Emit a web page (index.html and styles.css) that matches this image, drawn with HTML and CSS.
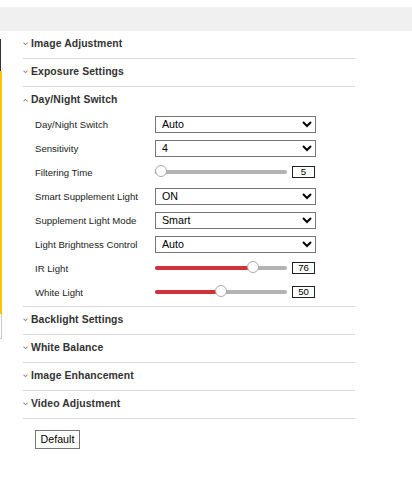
FILE: index.html
```html
<!DOCTYPE html>
<html>
<head>
<meta charset="utf-8">
<link rel="stylesheet" href="styles.css">
</head>
<body>
<div class="topbar"></div>
<div class="main">
  <div class="side">
    <div class="side-dark"></div>
    <div class="side-yellow"></div>
    <div class="side-box"></div>
  </div>
  <div class="content">
    <div class="sec">
      <div class="sec-head"><svg class="chev" viewBox="0 0 6 4" width="6" height="4"><path d="M0 0.6 L3 3.6 L6 0.6 L4.8 0.2 L3 2 L1.2 0.2 Z" fill="#808080"/></svg><span>Image Adjustment</span></div>
    </div>
    <div class="sec">
      <div class="sec-head"><svg class="chev" viewBox="0 0 6 4" width="6" height="4"><path d="M0 0.6 L3 3.6 L6 0.6 L4.8 0.2 L3 2 L1.2 0.2 Z" fill="#808080"/></svg><span>Exposure Settings</span></div>
    </div>
    <div class="sec open">
      <div class="sec-head"><svg class="chev" viewBox="0 0 6 4" width="6" height="4"><path d="M0 3.4 L3 0.4 L6 3.4 L4.8 3.8 L3 2 L1.2 3.8 Z" fill="#808080"/></svg><span>Day/Night Switch</span></div>
      <div class="form">
        <div class="row"><label>Day/Night Switch</label><select><option>Auto</option></select></div>
        <div class="row"><label>Sensitivity</label><select><option>4</option></select></div>
        <div class="row"><label>Filtering Time</label>
          <div class="slider"><div class="track"><div class="fill" style="width:6px"></div><div class="thumb" style="left:0px"></div></div><div class="val">5</div></div>
        </div>
        <div class="row"><label>Smart Supplement Light</label><select><option>ON</option></select></div>
        <div class="row"><label>Supplement Light Mode</label><select><option>Smart</option></select></div>
        <div class="row"><label>Light Brightness Control</label><select><option>Auto</option></select></div>
        <div class="row"><label>IR Light</label>
          <div class="slider"><div class="track"><div class="fill" style="width:98px"></div><div class="thumb" style="left:92px"></div></div><div class="val">76</div></div>
        </div>
        <div class="row"><label>White Light</label>
          <div class="slider"><div class="track"><div class="fill" style="width:66px"></div><div class="thumb" style="left:60px"></div></div><div class="val">50</div></div>
        </div>
      </div>
    </div>
    <div class="sec">
      <div class="sec-head"><svg class="chev" viewBox="0 0 6 4" width="6" height="4"><path d="M0 0.6 L3 3.6 L6 0.6 L4.8 0.2 L3 2 L1.2 0.2 Z" fill="#808080"/></svg><span>Backlight Settings</span></div>
    </div>
    <div class="sec">
      <div class="sec-head"><svg class="chev" viewBox="0 0 6 4" width="6" height="4"><path d="M0 0.6 L3 3.6 L6 0.6 L4.8 0.2 L3 2 L1.2 0.2 Z" fill="#808080"/></svg><span>White Balance</span></div>
    </div>
    <div class="sec">
      <div class="sec-head"><svg class="chev" viewBox="0 0 6 4" width="6" height="4"><path d="M0 0.6 L3 3.6 L6 0.6 L4.8 0.2 L3 2 L1.2 0.2 Z" fill="#808080"/></svg><span>Image Enhancement</span></div>
    </div>
    <div class="sec">
      <div class="sec-head"><svg class="chev" viewBox="0 0 6 4" width="6" height="4"><path d="M0 0.6 L3 3.6 L6 0.6 L4.8 0.2 L3 2 L1.2 0.2 Z" fill="#808080"/></svg><span>Video Adjustment</span></div>
    </div>
    <div class="actions"><button class="btn">Default</button></div>
  </div>
</div>
</body>
</html>
```
FILE: styles.css
```css
html, body {
  margin: 0;
  padding: 0;
  background: #fff;
  font-family: "Liberation Sans", Arial, sans-serif;
}
.topbar {
  margin-top: 7px;
  height: 24px;
  background: #f0f0f0;
}
.main {
  display: flex;
}
.side {
  width: 2px;
  padding-top: 8px;
  display: flex;
  flex-direction: column;
}
.side-dark {
  width: 1px;
  height: 32px;
  background: #333;
}
.side-yellow {
  width: 2px;
  height: 243px;
  background: #f7c600;
}
.side-box {
  width: 1px;
  height: 24px;
  border-right: 1px solid #c8c8c8;
  border-bottom: 1px solid #c8c8c8;
}
.content {
  margin-left: 21px;
  width: 332px;
}
.sec {
  border-bottom: 1px solid #d9d9d9;
}
.sec-head {
  height: 27px;
  box-sizing: border-box;
  padding-top: 7px;
  display: flex;
  align-items: flex-start;
  font-size: 10.4px;
  line-height: 12px;
  font-weight: bold;
  color: #333;
  letter-spacing: 0.1px;
}
.sec.open .sec-head {
  height: 25px;
}
.chev {
  width: 5px;
  height: 4px;
  margin: 4px 3px 0 0;
}
.form {
  padding-bottom: 2px;
}
.row {
  height: 24px;
  display: flex;
  align-items: center;
}
.row label {
  width: 120px;
  padding-left: 12px;
  font-size: 9.6px;
  color: #222;
}
.row select {
  width: 161px;
  height: 17px;
  font-family: "Liberation Sans", Arial, sans-serif;
  font-size: 10.67px;
  color: #000;
  background: #fff;
  border: 1px solid #767676;
  border-radius: 0;
  padding: 0 0 0 2px;
  margin: 0;
}
.slider {
  display: flex;
  align-items: center;
}
.track {
  position: relative;
  width: 132px;
  height: 4px;
  border-radius: 2px;
  background: #b3b3b3;
}
.fill {
  height: 4px;
  border-radius: 2px;
  background: #d1323a;
}
.thumb {
  position: absolute;
  top: -5px;
  width: 12px;
  height: 12px;
  box-sizing: border-box;
  border: 1px solid #aaa;
  border-radius: 50%;
  background: #fff;
}
.val {
  margin-left: 5px;
  width: 23px;
  height: 12px;
  box-sizing: border-box;
  border: 1px solid #222;
  font-size: 9.6px;
  line-height: 10px;
  text-align: center;
  color: #000;
}
.actions {
  padding: 10px 0 0 12px;
}
.btn {
  height: 19px;
  width: 45px;
  padding: 0;
  font-family: "Liberation Sans", Arial, sans-serif;
  font-size: 10.67px;
  color: #000;
  background: #fff;
  border: 1px solid #767676;
  border-radius: 0;
}
```
